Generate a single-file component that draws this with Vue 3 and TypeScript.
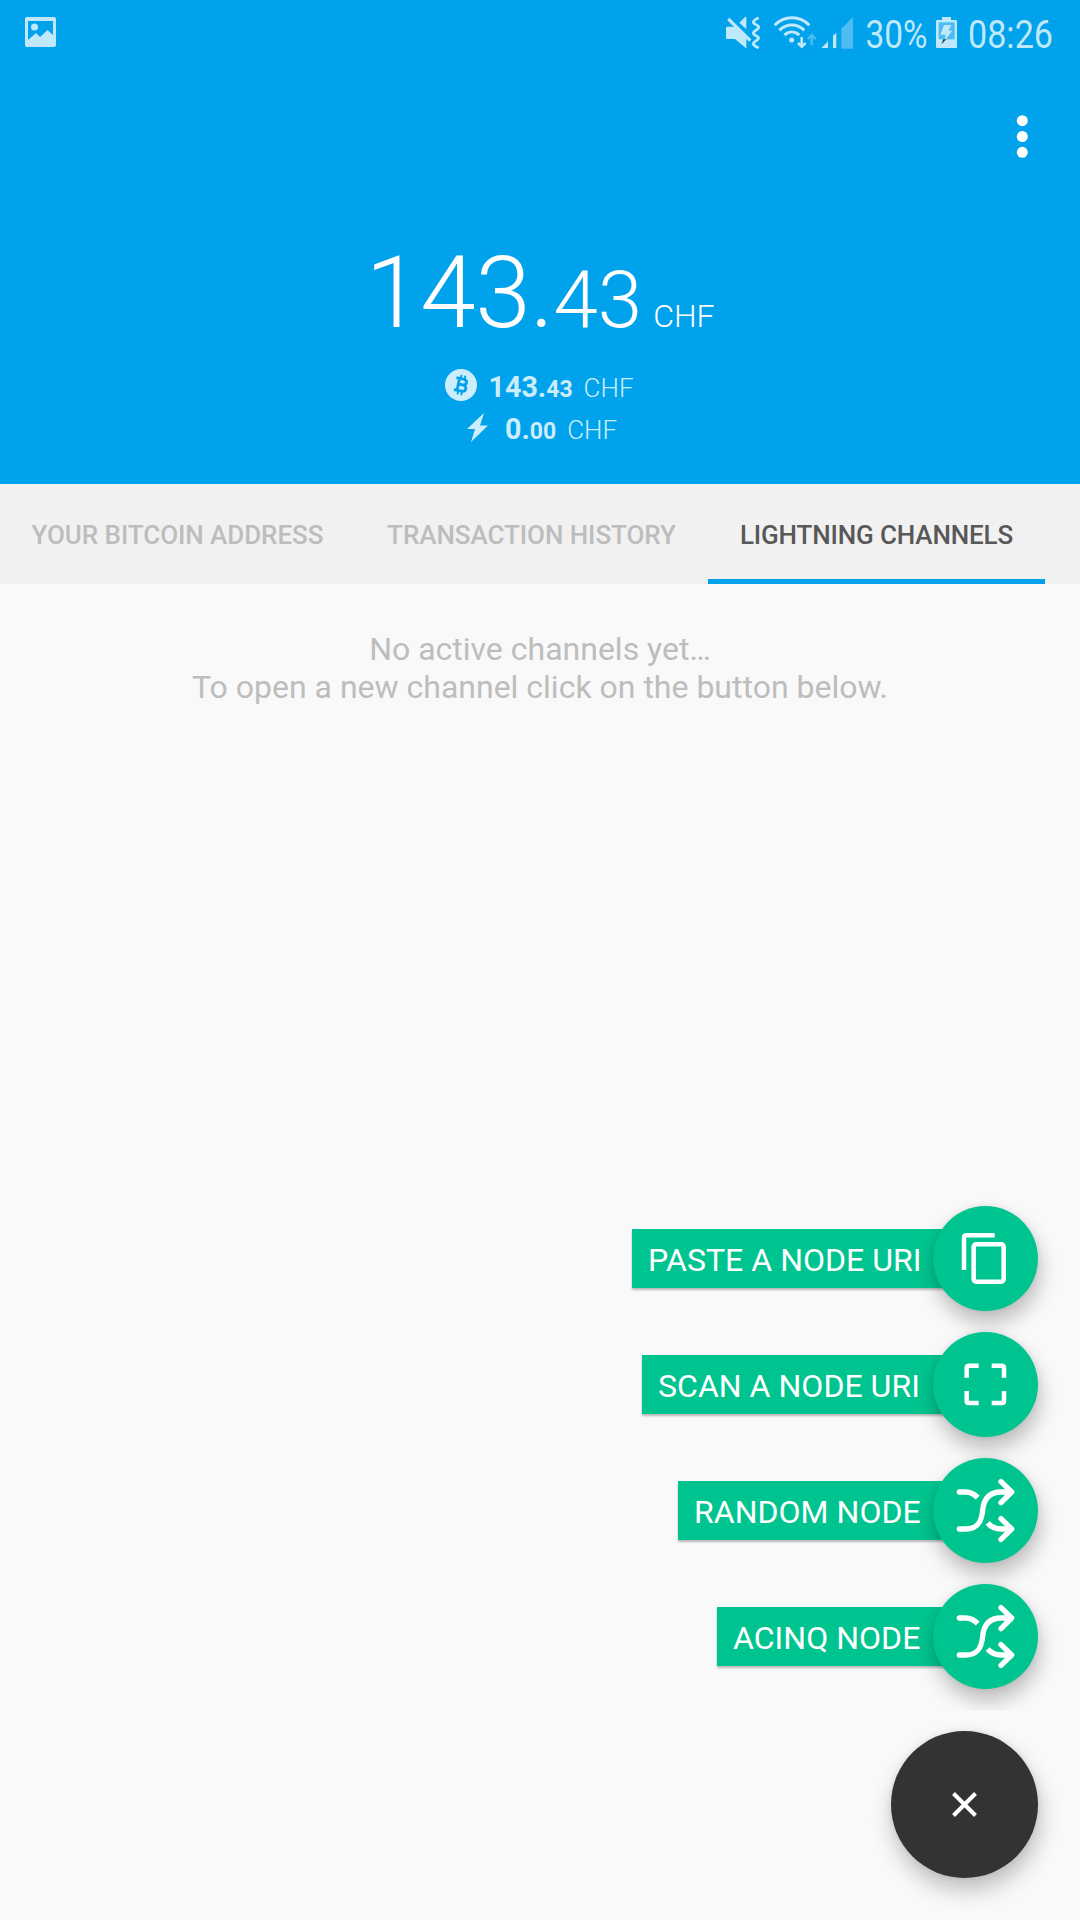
<script setup lang="ts">
type IconName = 'copy' | 'scan' | 'shuffle'

interface Tab {
  title: string
  width: number
}

interface ChannelAction {
  label: string
  icon: IconName
  width: number
}

const tabs: Tab[] = [
  { title: 'YOUR BITCOIN ADDRESS', width: 355 },
  { title: 'TRANSACTION HISTORY', width: 353 },
  { title: 'LIGHTNING CHANNELS', width: 337 },
]
const activeTab = 2

const actions: ChannelAction[] = [
  { label: 'PASTE A NODE URI', icon: 'copy', width: 317 },
  { label: 'SCAN A NODE URI', icon: 'scan', width: 307 },
  { label: 'RANDOM NODE', icon: 'shuffle', width: 271 },
  { label: 'ACINQ NODE', icon: 'shuffle', width: 232 },
]
</script>

<template>
  <div class="screen">
    <header class="header">
      <div class="status">
        <svg class="gallery" width="31" height="30" viewBox="0 0 31 30">
          <path fill-rule="evenodd" d="M2 0H29Q31 0 31 2V28Q31 30 29 30H2Q0 30 0 28V2Q0 0 2 0ZM3 4V23L11 16L15 20L22.500 13L28 18V4Z" />
          <circle cx="9.500" cy="10" r="3.500" />
        </svg>
        <div class="status-right">
          <svg width="38" height="36" viewBox="72 42 114 108">
            <path d="M81 80H104L139 114V144H137L105 117H81Q78 117 78 114V83Q78 80 81 80ZM118 68L135 51H139V88Z" />
            <path d="M85 57L151 122" fill="none" stroke="#bfe8fb" stroke-width="9.500" />
            <path d="M176 53C168 57 158 62 160 67C163 74 177 75 176 83C175 90 160 92 160 99C160 107 176 107 176 114C176 121 160 124 160 131C160 137 170 140 176 144" fill="none" stroke="#bfe8fb" stroke-width="8.500" />
          </svg>
          <svg class="wifi" width="46" height="36" viewBox="216 42 138 108">
            <g fill="none" stroke="#bfe8fb" stroke-width="9">
              <path d="M224 76C252 46 300 46 328 76" />
              <path d="M238 91C259 70 292 70 313 91" />
              <path d="M253 105C267 93 284 93 298 105" />
              <path d="M305 111V141M294 129L305 140L317 129" stroke-width="7.500" />
              <path d="M335 135V105M323 117L335 105L347 117" stroke="#4dbdf1" stroke-width="7" />
            </g>
            <circle cx="275" cy="120" r="7.500" />
          </svg>
          <svg class="signal" width="35" height="36" viewBox="360 42 105 108">
            <path d="M364 144L384 124V144ZM399 144V107L409 98V144Z" />
            <path d="M424 146V86L459 51V146Z" fill="#4dbdf1" />
          </svg>
          <svg class="percent" width="63" height="36" viewBox="0 0 63 36">
            <text x="0.500" y="34" textLength="62" lengthAdjust="spacingAndGlyphs">30%</text>
          </svg>
          <svg class="battery" width="25" height="36" viewBox="702 42 75 108">
            <path d="M726 51H753V60H768Q771 60 771 63V141Q771 144 768 144H711Q708 144 708 141V63Q708 60 711 60H726Z" />
            <path d="M716 67H764V118H716Z" fill="#4dbdf1" />
            <path d="M732 75H754L745 92H757L733 123L737 104H721Z" />
            <path d="M730 118H739L724 133Z" fill="#17394a" />
          </svg>
          <svg class="time" width="86" height="36" viewBox="0 0 86 36">
            <text x="0" y="34" textLength="85" lengthAdjust="spacingAndGlyphs">08:26</text>
          </svg>
        </div>
      </div>

      <div class="toolbar">
        <svg width="12" height="44" viewBox="0 0 12 44">
          <circle cx="6.300" cy="5.700" r="5.500" />
          <circle cx="6.300" cy="21.500" r="5.500" />
          <circle cx="6.300" cy="37.300" r="5.500" />
        </svg>
      </div>

      <div class="total"><span class="whole">143.</span><span class="cents">43</span><span class="unit">CHF</span></div>

      <div class="line">
        <svg class="btc" width="32" height="32" viewBox="0 0 32 32">
          <circle cx="16" cy="16" r="16" />
          <g transform="rotate(12 16 16)" fill="none" stroke="#00a2eb">
            <path d="M10 9.800H17.500C22 9.800 22 15.500 17.500 15.500H13M17.500 15.500C23 15.500 22.500 22 17.500 22H10M13.200 9.800V22" stroke-width="2.800" />
            <path d="M14.500 6V10M18.300 6V10M14.500 22V26M18.300 22V26" stroke-width="1.900" />
          </g>
        </svg>
        <span class="whole">143.</span><span class="cents">43</span><span class="unit">CHF</span>
      </div>
      <div class="line second">
        <svg class="bolt" width="22" height="29" viewBox="0 0 22 29">
          <path d="M17 0L0 16H8L4 29L21 12.500H13Z" />
        </svg>
        <span class="whole">0.</span><span class="cents">00</span><span class="unit">CHF</span>
      </div>
    </header>

    <nav class="tabs">
      <div
        v-for="(tab, i) in tabs"
        :key="tab.title"
        class="tab"
        :class="{ active: i === activeTab }"
        :style="{ width: tab.width + 'px' }"
      >
        {{ tab.title }}
      </div>
    </nav>

    <main class="content">
      <p class="empty">No active channels yet…<br />To open a new channel click on the button below.</p>

      <div class="menu">
        <div class="actions">
          <div v-for="action in actions" :key="action.label" class="action">
            <span class="label" :style="{ width: action.width + 'px' }">{{ action.label }}</span>
            <span class="mini">
              <svg v-if="action.icon === 'copy'" width="105" height="105" viewBox="0 0 315 315">
                <g fill="none" stroke="#fff" stroke-width="13.500">
                  <path d="M93 192V95Q93 88 100 88H185" />
                  <rect x="122" y="115" width="90" height="112" rx="7" />
                </g>
              </svg>
              <svg v-else-if="action.icon === 'scan'" width="105" height="105" viewBox="0 0 315 315">
                <path d="M101 137V108Q101 101 108 101H137M176 101H206Q213 101 213 108V137M213 177V206Q213 213 206 213H176M137 213H108Q101 213 101 206V177" fill="none" stroke="#fff" stroke-width="13.500" />
              </svg>
              <svg v-else width="105" height="105" viewBox="0 0 315 315">
                <g fill="none" stroke="#fff" stroke-width="16">
                  <path d="M79 213H98C135 213 146 190 149 157C152 122 168 102 205 102H236M204 71L236 102L204 134M204 182L236 213L204 244" stroke-linecap="round" stroke-linejoin="round" />
                  <path d="M79 102H98C113 102 124 108 134 119" />
                  <path d="M164 195C174 207 188 213 205 213H236" />
                </g>
                <circle cx="79" cy="102" r="8" fill="#fff" />
              </svg>
            </span>
          </div>
        </div>
        <div class="fab">
          <svg width="27" height="27" viewBox="0 0 27 27">
            <path d="M2.500 2.500L24.500 24.500M24.500 2.500L2.500 24.500" stroke="#fff" stroke-width="4" />
          </svg>
        </div>
      </div>
    </main>
  </div>
</template>

<style>
body {
  background: #f9f9f9;
}
</style>

<style scoped>
.screen {
  width: 1080px;
  height: 1920px;
  display: flex;
  flex-direction: column;
  overflow: hidden;
  background: #f9f9f9;
  font-family: Roboto, "Liberation Sans", sans-serif;
}
svg {
  display: block;
  flex: none;
}
.header {
  box-sizing: border-box;
  height: 484px;
  background: #00a2eb;
  color: #fff;
}
.status {
  box-sizing: border-box;
  height: 72px;
  padding: 14px 26px 0 25px;
  display: flex;
  justify-content: space-between;
  fill: #bfe8fb;
}
.gallery {
  margin-top: 3px;
}
.status-right {
  display: flex;
}
.status-right svg {
  overflow: visible;
}
.status-right text {
  font-size: 38.5px;
}
.wifi { margin-left: 10px; }
.signal { margin-left: 2px; }
.percent { margin-left: 10px; }
.battery { margin-left: 6px; }
.time { margin-left: 9px; }
.toolbar {
  box-sizing: border-box;
  height: 161px;
  padding: 43px 52px 0 0;
  display: flex;
  justify-content: flex-end;
  fill: #fff;
}
.total {
  height: 119px;
  display: flex;
  justify-content: center;
  align-items: baseline;
  line-height: 120px;
  font-weight: 300;
}
.total .whole {
  font-size: 100px;
  letter-spacing: -0.6px;
}
.total .cents { font-size: 80px; }
.total .unit {
  margin-left: 11px;
  font-size: 32px;
}
.line {
  height: 42px;
  margin-top: 15px;
  display: flex;
  justify-content: center;
  align-items: baseline;
  line-height: 40px;
  color: #ccedfb;
  fill: #ccedfb;
}
.line.second {
  box-sizing: border-box;
  margin-top: 0;
  padding-left: 4px;
}
.line .whole {
  font-size: 28.7px;
  font-weight: 700;
}
.line .cents {
  font-size: 23px;
  font-weight: 700;
}
.line .unit {
  margin-left: 11px;
  font-size: 26px;
  font-weight: 300;
}
.btc {
  align-self: flex-start;
  margin: 2px 11px 0 -1px;
}
.bolt {
  align-self: flex-start;
  margin: 4px 16px 0 0;
}
.tabs {
  height: 100px;
  display: flex;
  background: #f1f1f1;
}
.tab {
  box-sizing: border-box;
  flex: none;
  border-bottom: 5px solid transparent;
  font-size: 26px;
  font-weight: 500;
  letter-spacing: -0.06px;
  line-height: 102px;
  text-align: center;
  color: #bdbdbd;
  white-space: nowrap;
}
.tab.active {
  color: #585858;
  border-color: #00a2eb;
  letter-spacing: -0.14px;
}
.content {
  flex: 1;
  display: flex;
  flex-direction: column;
  justify-content: space-between;
}
.empty {
  margin: 46px 0 0;
  font-size: 32px;
  line-height: 38px;
  text-align: center;
  color: #bdbdbd;
}
.menu {
  padding: 0 42px 42px 0;
  display: flex;
  flex-direction: column;
  align-items: flex-end;
}
.actions {
  padding: 20px 42px 21px 20px;
  margin-right: -42px;
  display: flex;
  flex-direction: column;
  align-items: flex-end;
  gap: 21px;
  overflow: hidden;
}
.action {
  height: 105px;
  display: flex;
  align-items: center;
}
.label {
  box-sizing: border-box;
  height: 59px;
  padding-left: 16px;
  margin-right: -16px;
  background: #00c48f;
  box-shadow: 0 2px 2px rgba(0, 0, 0, 0.26);
  color: #fff;
  font-size: 32px;
  letter-spacing: 0.03px;
  line-height: 62px;
  white-space: nowrap;
}
.mini {
  position: relative;
  width: 105px;
  height: 105px;
  border-radius: 50%;
  background: #00c48f;
  box-shadow: 2px 12px 20px rgba(0, 0, 0, 0.24), 0 0 6px rgba(0, 0, 0, 0.08);
}
.fab {
  width: 147px;
  height: 147px;
  margin-top: 21px;
  display: flex;
  align-items: center;
  justify-content: center;
  border-radius: 50%;
  background: #333;
  box-shadow: 2px 12px 22px rgba(0, 0, 0, 0.24), 0 0 6px rgba(0, 0, 0, 0.08);
}
</style>
